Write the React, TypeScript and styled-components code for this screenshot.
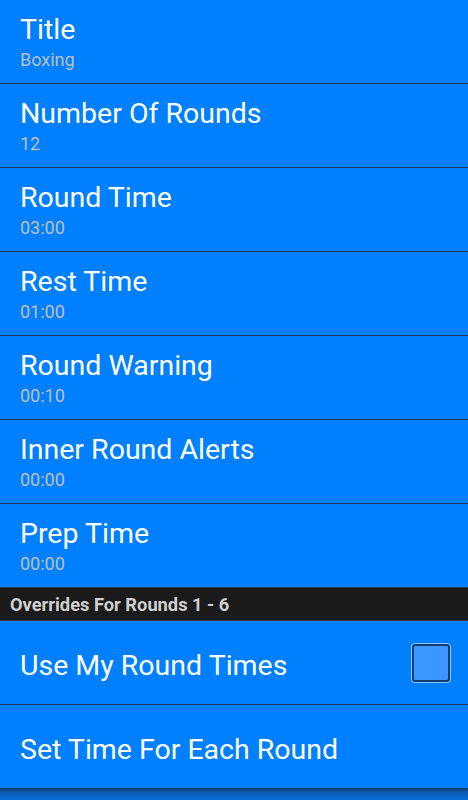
import React from 'react';
import styled, { createGlobalStyle } from 'styled-components';

const GlobalStyle = createGlobalStyle`
  html, body {
    margin: 0;
    padding: 0;
    background: #0a6fd8;
  }
  body {
    font-family: Roboto, "Noto Sans", sans-serif;
  }
`;

type Pref = { title: string; summary: string };

const prefs: Pref[] = [
  { title: 'Title', summary: 'Boxing' },
  { title: 'Number Of Rounds', summary: '12' },
  { title: 'Round Time', summary: '03:00' },
  { title: 'Rest Time', summary: '01:00' },
  { title: 'Round Warning', summary: '00:10' },
  { title: 'Inner Round Alerts', summary: '00:00' },
  { title: 'Prep Time', summary: '00:00' },
];

const App: React.FC = () => {
  return (
    <Screen>
      <GlobalStyle />
      <List>
        {prefs.map((p) => (
          <Row key={p.title}>
            <RowText>
              <Title>{p.title}</Title>
              <Summary>{p.summary}</Summary>
            </RowText>
          </Row>
        ))}
        <Category>Overrides For Rounds 1 - 6</Category>
        <Row>
          <RowText>
            <Title single>Use My Round Times</Title>
          </RowText>
          <CheckBox />
        </Row>
        <Row last>
          <RowText>
            <Title single>Set Time For Each Round</Title>
          </RowText>
        </Row>
      </List>
      <BottomShade />
    </Screen>
  );
};

export default App;

const Screen = styled.div`
  width: 468px;
  height: 800px;
  display: flex;
  flex-direction: column;
  background: #007fff;
  overflow: hidden;
`;

const List = styled.div`
  display: flex;
  flex-direction: column;
`;

const Row = styled.div<{ last?: boolean }>`
  display: flex;
  align-items: center;
  height: 83px;
  padding: 0 18px 0 20px;
  border-bottom: 1px solid ${(p) => (p.last ? '#0d3a6a' : '#263955')};
  background: #007fff;
`;

const RowText = styled.div`
  flex: 1;
  display: flex;
  flex-direction: column;
`;

const Title = styled.div<{ single?: boolean }>`
  color: #ffffff;
  font-size: 28.5px;
  line-height: 34px;
  margin-top: ${(p) => (p.single ? '6px' : '0')};
`;

const Summary = styled.div`
  color: #bcc0c4;
  font-size: 18px;
  line-height: 22px;
  margin-top: 2px;
`;

const Category = styled.div`
  height: 32px;
  display: flex;
  align-items: center;
  padding-left: 10px;
  background: #1b1b1b;
  border-bottom: 1px solid #3a3a3a;
  color: #cfcfcf;
  font-size: 18.3px;
  font-weight: 700;
`;

const CheckBox = styled.div`
  box-sizing: border-box;
  width: 38px;
  height: 38px;
  border: 2px solid #0f3d70;
  border-radius: 3px;
  background: #3a97ff;
  box-shadow: 0 0 0 1px #8cc4ff;
`;

const BottomShade = styled.div`
  flex: 1;
  background: linear-gradient(#123f6f 0px, #0b5cb4 3px, #0a6fd8 100%);
`;
